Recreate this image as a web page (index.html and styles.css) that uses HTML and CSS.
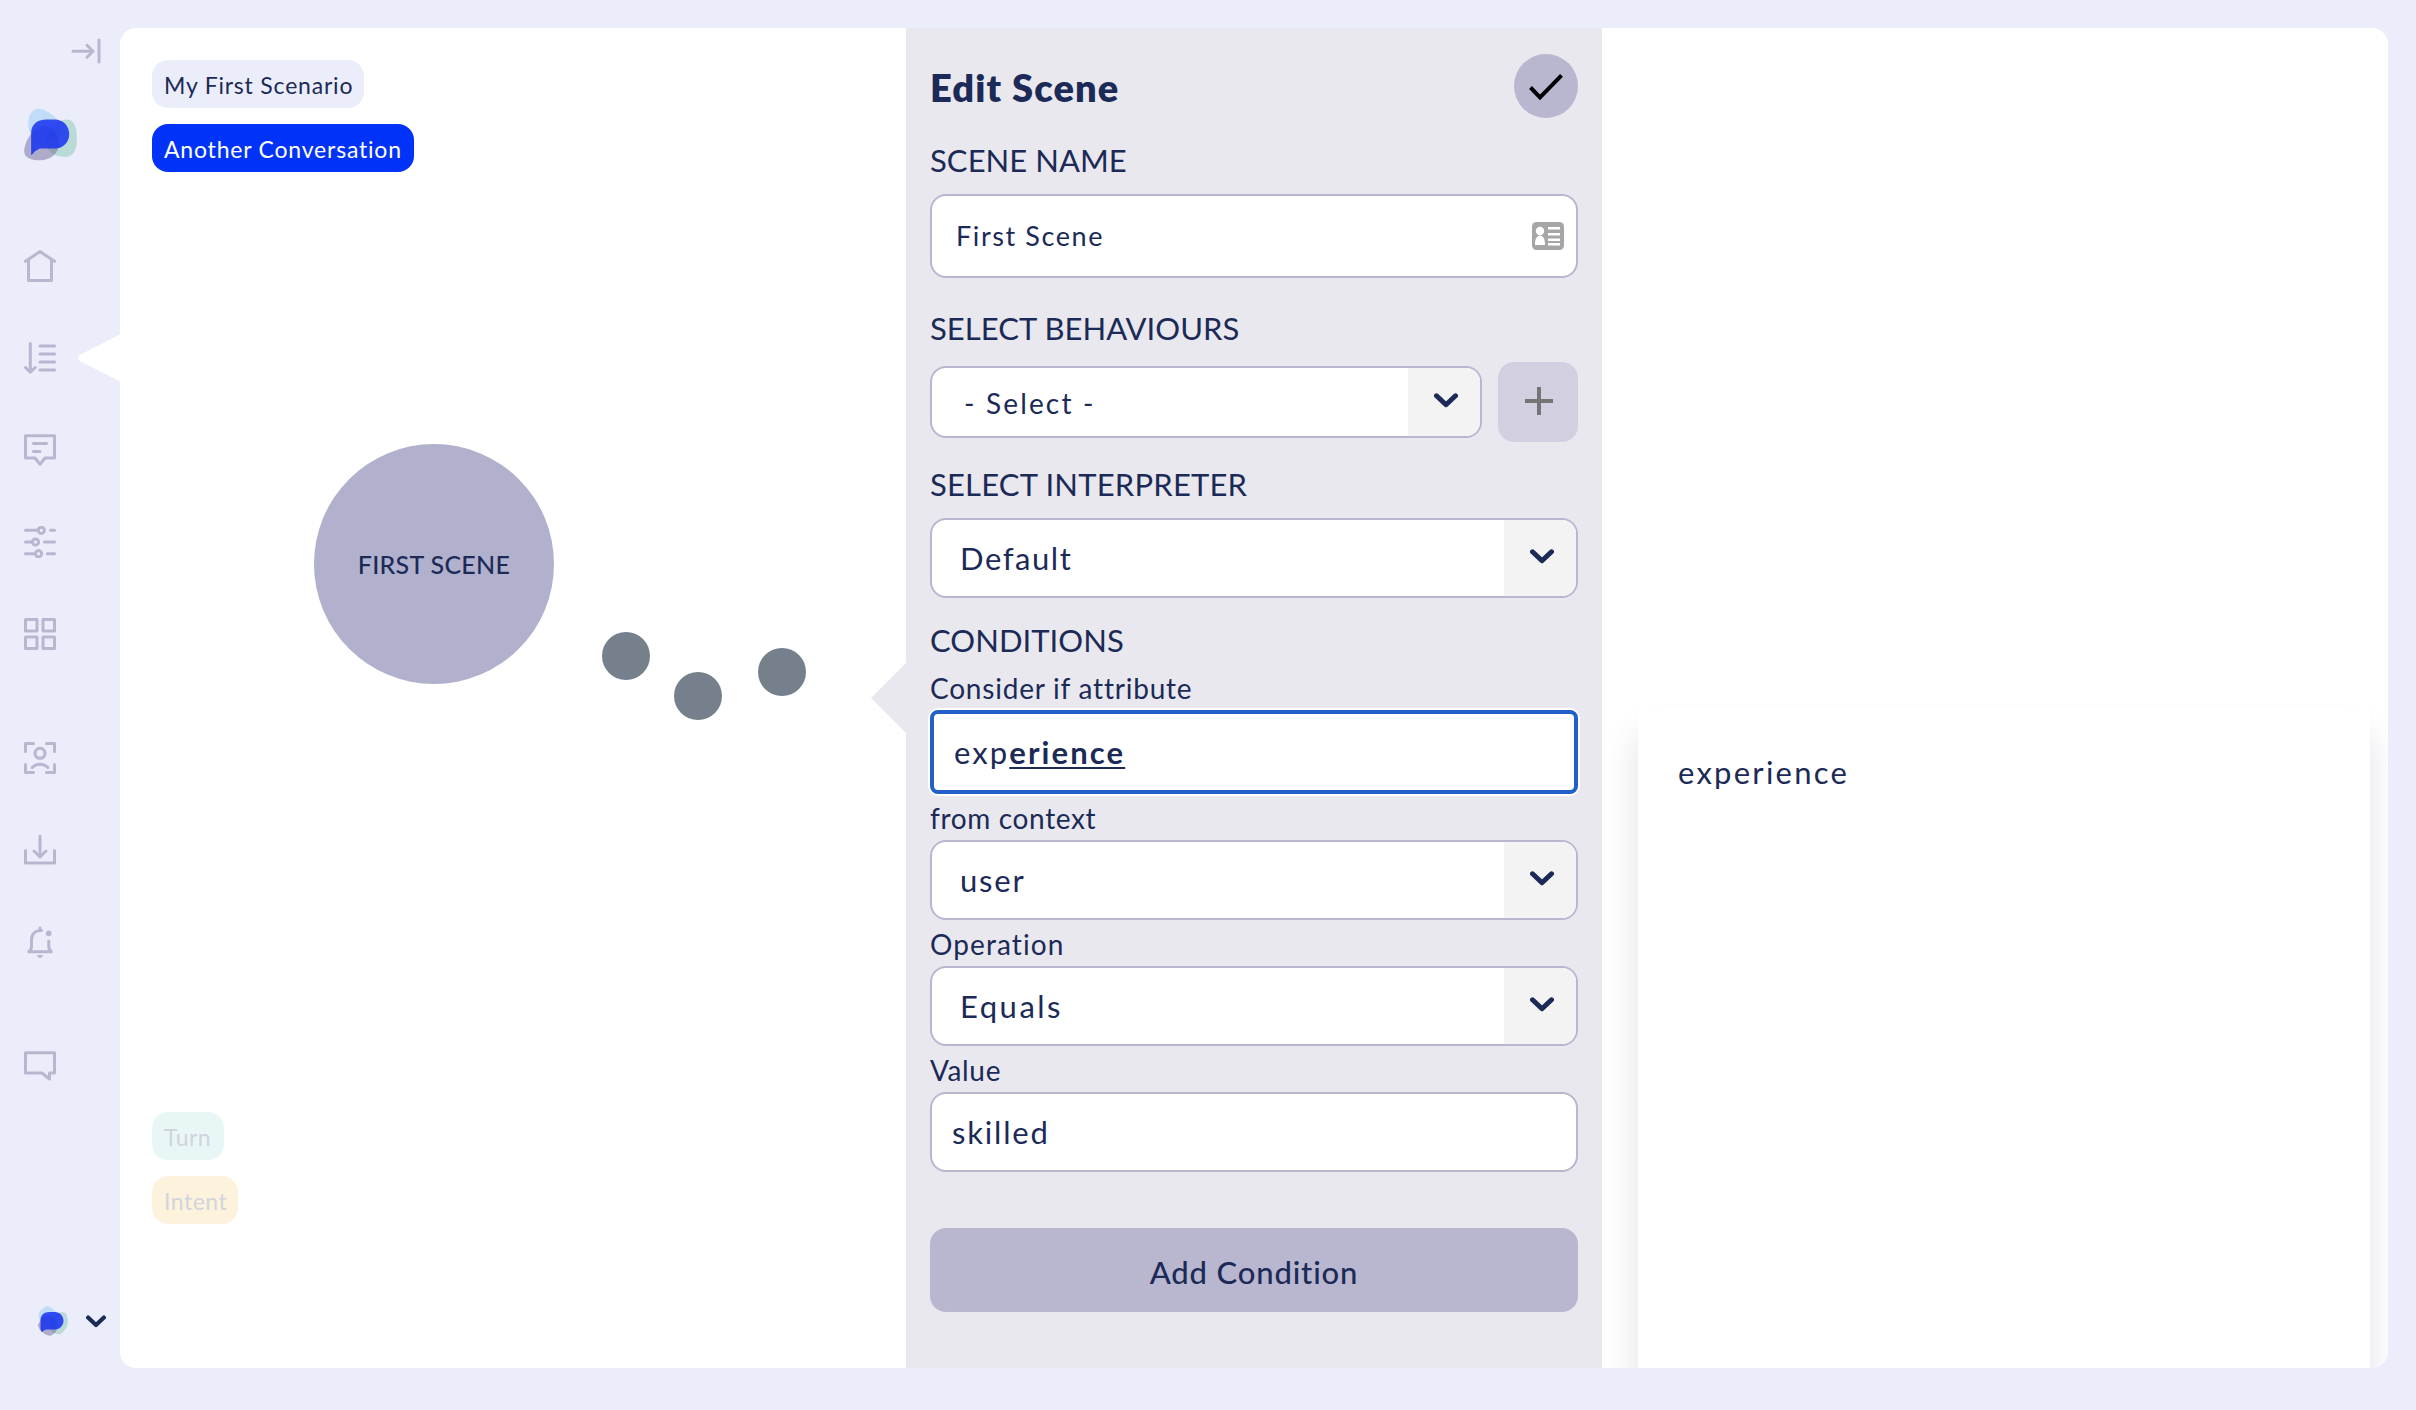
FILE: index.html
```html
<!DOCTYPE html>
<html lang="en">
<head>
<meta charset="utf-8">
<title>Edit Scene</title>
<link rel="stylesheet" href="styles.css">
</head>
<body>
<svg width="0" height="0" class="defs">
  <symbol id="logo" viewBox="42 22 162 160">
    <path fill="#a3d0f6" fill-opacity=".6" d="M86 24C110 24 155 58 155 90C155 115 122 128 95 122C70 115 54 95 54 70C54 45 65 24 86 24Z"/>
    <path fill="#84c4b4" fill-opacity=".48" d="M172 57C195 57 201 85 201 115C201 150 190 170 165 170C130 170 107 150 107 125C107 100 135 57 172 57Z"/>
    <path fill="#5a5488" fill-opacity=".42" d="M101 77C128 77 147 100 147 130C147 160 120 180 90 180C60 180 42 172 42 152C42 125 70 77 101 77Z"/>
    <path fill="#1a35f0" fill-opacity=".87" d="M63 165V100C63 72 80 57 110 57H135C160 57 178 77 178 101C178 125 160 144 135 144H92C80 146 72 156 63 165Z"/>
  </symbol>
  <symbol id="chevron" viewBox="0 0 24 15"><path d="M2.5 2.8L12 11.8L21.5 2.8" fill="none" stroke="#1b2a56" stroke-width="5" stroke-linecap="round" stroke-linejoin="round"/></symbol>
</svg>
<div class="app">
  <aside class="sidebar">
    <svg class="collapse icon" viewBox="0 0 30 26"><path d="M2 13.3H22M16 7.3L22 13.3L16 19.3M28 2V24"/></svg>
    <svg class="logo"><use href="#logo"/></svg>
    <nav class="nav">
      <div class="nav-group">
        <svg class="icon" viewBox="0 0 32 32"><path d="M1.5 11.3L16 1.6L30.5 11.3M4.5 10V30.5H27.5V10"/></svg>
        <svg class="icon" viewBox="0 0 32 32"><path d="M6.3 1.5V30M1.5 25.5L6.3 30.2L11.2 25.5M16 4H30.5M16 12H30.5M16 20H30.5M16 28H30.5"/></svg>
        <svg class="icon" viewBox="0 0 32 32"><path d="M1.5 1.7H30.5V24H21L16 30.2L11 24H1.5ZM9.5 9.6H22.5M9.5 17.6H16"/></svg>
        <svg class="icon" viewBox="0 0 32 32"><path d="M1.5 4.3H14M26.5 4.3H30.5M1.5 16H8M20.5 16H30.5M1.5 27.7H11M23.3 27.7H30.5"/><circle cx="17.3" cy="4.3" r="3.1"/><circle cx="11.5" cy="16" r="3.1"/><circle cx="14.5" cy="27.7" r="3.1"/></svg>
        <svg class="icon" viewBox="0 0 32 32"><path d="M1.5 1.5H13V13H1.5ZM19 1.5H30.5V13H19ZM1.5 19H13V30.5H1.5ZM19 19H30.5V30.5H19Z"/></svg>
      </div>
      <div class="nav-group">
        <svg class="icon" viewBox="0 0 32 32"><path d="M1.5 9.5V1.5H9.5M22.5 1.5H30.5V9.5M1.5 22.5V30.5H9.5M22.5 30.5H30.5V22.5M8.3 25.5C12 21 20 21 23.8 25.5"/><circle cx="16" cy="11.3" r="5"/></svg>
        <svg class="icon" viewBox="0 0 32 32"><path d="M1.5 16.5V29H30.5V16.5M16 2V22.5M10 17L16 23L22 17"/></svg>
        <svg class="icon" viewBox="0 0 32 32"><path d="M16 1.7V4.5M17.5 4.5C11 4 7.5 8.5 7.5 13.5V21C7.5 23.5 6 24 4.8 25.7H27.2C26 24 24.8 23.5 24.8 21V15"/><circle class="solid" cx="24.7" cy="7.3" r="2.9"/><path class="solid" d="M13 29H19C18.5 33 13.5 33 13 29Z"/></svg>
      </div>
      <div class="nav-group">
        <svg class="icon" viewBox="0 0 32 32"><path d="M1.5 2.7H30.5V23H25.5V29L18 23H1.5Z"/></svg>
      </div>
    </nav>
    <div class="account">
      <span class="avatar"><svg><use href="#logo"/></svg></span>
      <svg class="account-chevron"><use href="#chevron"/></svg>
    </div>
    <svg class="pointer" viewBox="0 0 44 48"><path d="M44 0L3 20.7Q-1 24 3 27.3L44 48Z" fill="#fff"/></svg>
  </aside>
  <main class="board">
    <section class="canvas">
      <div class="tags">
        <span class="tag scenario">My First Scenario</span>
        <span class="tag conversation">Another Conversation</span>
      </div>
      <div class="node scene">FIRST SCENE</div>
      <div class="node dot dot-a"></div>
      <div class="node dot dot-b"></div>
      <div class="node dot dot-c"></div>
      <div class="tags">
        <span class="tag turn">Turn</span>
        <span class="tag intent">Intent</span>
      </div>
    </section>
    <section class="panel">
      <svg class="panel-pointer" viewBox="0 0 36 72"><path d="M36 0L0 36L36 72Z" fill="#e9e8ef"/></svg>
      <header class="panel-head">
        <h1>Edit Scene</h1>
        <span class="confirm"><svg viewBox="0 0 64 64"><path d="M16.5 33.5L26 43.3L47.5 21.3" fill="none" stroke="#000" stroke-width="4"/></svg></span>
      </header>
      <h2>SCENE NAME</h2>
      <div class="field name"><span>First Scene</span>
        <svg class="card-icon" viewBox="0 0 32 28"><rect width="32" height="28" rx="4.5" fill="#a6a6a6"/><circle cx="8" cy="9" r="4.2" fill="#fff"/><path d="M3 23C3 16 5 14 8 13.5C11 14 13 16 13 23ZM16 5H28V7.5H16ZM16 11H28V13.5H16ZM16 16.5H28V19H16ZM16 21H28V23.5H16Z" fill="#fff"/></svg>
      </div>
      <h2 class="after-name">SELECT BEHAVIOURS</h2>
      <div class="behaviours">
        <div class="field select small"><span>- Select -</span><i class="arrow"><svg><use href="#chevron"/></svg></i></div>
        <span class="plus"><svg viewBox="0 0 28 28"><path d="M0 14H28M14 0V28" stroke="#757575" stroke-width="4"/></svg></span>
      </div>
      <h2 class="interpreter">SELECT INTERPRETER</h2>
      <div class="field select"><span class="default">Default</span><i class="arrow"><svg><use href="#chevron"/></svg></i></div>
      <h2 class="conditions">CONDITIONS</h2>
      <label class="attribute">Consider if attribute</label>
      <div class="field focused"><span>exp<b>erience</b></span></div>
      <label>from context</label>
      <div class="field select"><span>user</span><i class="arrow"><svg><use href="#chevron"/></svg></i></div>
      <label class="operation">Operation</label>
      <div class="field select"><span class="equals">Equals</span><i class="arrow"><svg><use href="#chevron"/></svg></i></div>
      <label>Value</label>
      <div class="field value"><span>skilled</span></div>
      <div class="add">Add Condition</div>
    </section>
    <section class="results">
      <div class="suggestions">experience</div>
    </section>
  </main>
</div>
</body>
</html>
```
FILE: styles.css
```css
* { box-sizing: border-box; }
body { margin: 0; background: #ebedfa; color: #1b2a56; font-family: "Lato", "Liberation Sans", sans-serif; }
svg { display: block; }
.defs { position: absolute; }
.app { display: flex; width: 2416px; height: 1410px; padding: 28px 28px 42px 0; }

.sidebar { position: relative; width: 120px; display: flex; flex-direction: column; align-items: flex-start; padding: 10px 0 32px 24px; }
.icon { width: 32px; height: 32px; fill: none; stroke: #b9b6d0; stroke-width: 3; stroke-linecap: round; stroke-linejoin: round; }
.icon .solid { fill: #b9b6d0; stroke: none; }
.collapse { width: 30px; height: 26px; margin-left: 46.5px; }
.logo { width: 54px; height: 53px; margin-top: 44px; }
.nav { display: flex; flex-direction: column; gap: 92px; margin-top: 89px; }
.nav-group { display: flex; flex-direction: column; gap: 60px; }
.account { display: flex; align-items: center; gap: 18px; margin: auto 0 0 13px; }
.avatar { width: 31px; height: 31px; border-radius: 50%; overflow: hidden; }
.avatar svg { width: 33px; height: 32px; margin-left: -1px; }
.account-chevron { width: 20px; height: 13px; margin-top: 2px; }
.pointer { position: absolute; left: 77px; top: 306px; width: 44px; height: 48px; }

.board { flex: 1; display: flex; background: #fff; border-radius: 16px; overflow: hidden; }
.canvas { position: relative; width: 786px; display: flex; flex-direction: column; justify-content: space-between; padding: 32px 32px 144px; }
.tags { display: flex; flex-direction: column; align-items: flex-start; gap: 16px; }
.tag { height: 48px; padding: 1px 0 0 12px; border-radius: 16px; font-size: 23px; line-height: 48px; letter-spacing: .8px; white-space: nowrap; }
.scenario { width: 212px; background: #ebedfa; }
.conversation { width: 262px; letter-spacing: .8px; background: #0033f7; color: #fff; }
.turn { width: 72px; letter-spacing: .5px; background: #e9f6f6; color: #d1d4dd; }
.intent { width: 86px; letter-spacing: .5px; background: #fdf2dc; color: #d1d4dd; }
.node { position: absolute; border-radius: 50%; }
.scene { left: 194px; top: 416px; width: 240px; height: 240px; background: #b1b1ce; font-size: 25px; font-weight: 500; line-height: 240px; letter-spacing: .3px; text-align: center; }
.dot { width: 48px; height: 48px; background: #75808c; }
.dot-a { left: 482px; top: 604px; }
.dot-b { left: 554px; top: 644px; }
.dot-c { left: 638px; top: 620px; }

.panel { position: relative; width: 696px; display: flex; flex-direction: column; padding: 26px 24px 0; background: #e9e8ef; }
.panel-pointer { position: absolute; left: -35.5px; top: 634px; width: 36px; height: 72px; }
.panel-head { display: flex; justify-content: space-between; align-items: center; height: 64px; }
h1 { margin: 0; padding-top: 2px; font-size: 38px; line-height: 46px; font-weight: 800; letter-spacing: 1.1px; }
.confirm { width: 64px; height: 64px; border-radius: 50%; background: #b9b6d0; }
h2 { margin: 23px 0 15px; font-size: 31px; line-height: 38px; font-weight: 400; letter-spacing: .05px; }
.after-name { margin-top: 31px; }
.interpreter { letter-spacing: .2px; }
.conditions { margin-bottom: 11px; }
.field { display: flex; align-items: center; height: 80px; border: 2px solid #b9b6d0; border-radius: 16px; background: #fff; overflow: hidden; font-size: 31px; line-height: 36px; letter-spacing: 1.8px; }
.name { height: 84px; padding: 0 12px 1px 24px; justify-content: space-between; font-size: 27px; line-height: 33px; letter-spacing: 1.6px; }
.card-icon { width: 32px; height: 28px; }
.behaviours { display: flex; align-items: center; gap: 16px; height: 80px; }
.select { justify-content: space-between; padding-left: 28px; }
.small { flex: 1; height: 72px; padding-left: 32px; font-size: 28px; line-height: 34px; letter-spacing: 2.17px; }
.default { letter-spacing: 1.55px; }
.equals { letter-spacing: 2.5px; }
.small span { padding-top: 2px; }
.arrow { display: flex; align-items: center; align-self: stretch; width: 72px; padding: 0 0 4px 26px; background: #f3f3f3; }
.arrow svg { width: 24px; height: 15px; }
.plus { display: flex; align-items: center; justify-content: center; width: 80px; height: 80px; padding: 0 0 3px 2px; border-radius: 16px; background: #d2cfe0; }
.plus svg { width: 28px; height: 28px; }
label { margin: 7px 0 5px; font-size: 28px; line-height: 34px; letter-spacing: .65px; }
.attribute { margin-top: 1px; letter-spacing: .78px; }
.operation { letter-spacing: 1.1px; }
.focused { height: 84px; padding-left: 20px; border: 4px solid #2160c9; border-radius: 8px; box-shadow: 0 0 0 2px #fff; letter-spacing: 2.1px; }
.focused b { text-decoration: underline; text-decoration-thickness: 2px; text-underline-offset: 3px; text-decoration-skip-ink: none; }
.value { padding-left: 20px; }
.add { height: 84px; margin-top: 56px; padding-top: 3px; border-radius: 16px; background: #b9b6d0; font-size: 31px; font-weight: 500; line-height: 82px; letter-spacing: .85px; text-align: center; }

.results { flex: 1; padding: 680px 18px 0 36px; }
.suggestions { height: 760px; padding: 46px 40px; background: #fff; box-shadow: 0 28px 32px rgba(60, 66, 110, .16); font-size: 31px; line-height: 36px; letter-spacing: 2.25px; }
```
